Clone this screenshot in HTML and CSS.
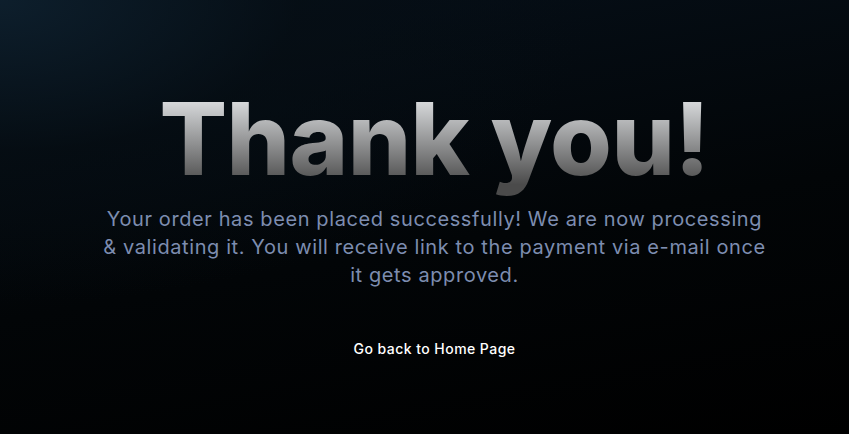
FILE: index.html
```html
<!DOCTYPE html>
<html lang="en">
<head>
<meta charset="utf-8">
<title>Thank you</title>
<link rel="stylesheet" href="styles.css">
</head>
<body>
<main class="page">
  <section class="content">
    <h1 class="title">Thank you!</h1>
    <p class="message">Your order has been placed successfully! We are now processing<br>&amp; validating it. You will receive link to the payment via e-mail once<br>it gets approved.</p>
    <a class="home-link" href="#">Go back to Home Page</a>
  </section>
</main>
</body>
</html>
```
FILE: styles.css
```css
* { box-sizing: border-box; }
html, body { margin: 0; height: 100%; }
body {
  font-family: "Inter", "Noto Sans", sans-serif;
  background: #000;
}
.page {
  min-height: 100vh;
  background:
    radial-gradient(ellipse 70% 70% at 0% 0%, rgba(14, 32, 46, 0.9) 0%, rgba(6, 14, 20, 0.6) 50%, rgba(0, 0, 0, 0) 100%),
    linear-gradient(170deg, #06101a 0%, #020507 55%, #000 100%);
  display: flex;
  justify-content: center;
  padding: 74px 0 0 20px;
}
.content {
  display: flex;
  flex-direction: column;
  align-items: center;
  width: 720px;
}
.title {
  margin: 0;
  font-size: 100px;
  font-weight: 800;
  line-height: 130px;
  letter-spacing: -0.6px;
  background: linear-gradient(to bottom, #d9dbdd 20%, #4b4b4b 85%);
  -webkit-background-clip: text;
  background-clip: text;
  color: transparent;
}
.message {
  margin: 1px 0 0;
  font-size: 20px;
  line-height: 28px;
  letter-spacing: 0.6px;
  white-space: nowrap;
  color: #7d8db0;
  text-align: center;
}
.home-link {
  margin-top: 51px;
  font-size: 14px;
  font-weight: 500;
  letter-spacing: 0.45px;
  color: #fff;
  text-decoration: none;
}
```
